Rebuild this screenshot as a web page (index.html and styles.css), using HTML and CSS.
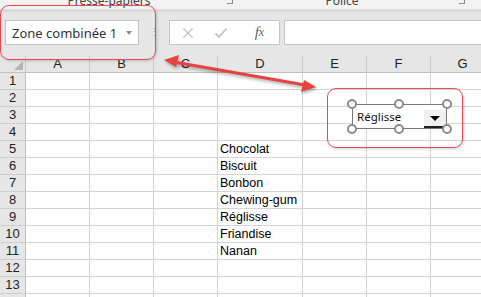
FILE: index.html
```html
<!DOCTYPE html>
<html lang="fr">
<head>
<meta charset="utf-8">
<title>Zone combinée</title>
<link rel="stylesheet" href="styles.css">
</head>
<body>
<div class="app">
  <div class="ribbon">
    <div class="group g1"><span class="glabel">Presse-papiers</span><span class="launcher"></span></div>
    <div class="group g2"><span class="glabel">Police</span><span class="launcher"></span></div>
  </div>
  <div class="fbar">
    <div class="namebox"><span class="nbtext">Zone combinée 1</span><span class="nbarrow"></span></div>
    <div class="grip">⋮</div>
    <div class="fbtns">
      <span class="fbtn">
        <svg width="12" height="12" viewBox="0 0 12 12"><path d="M1.5 1.5 L10.5 10.5 M10.5 1.5 L1.5 10.5" stroke="#c3c3c3" stroke-width="1.4" fill="none"/></svg>
      </span>
      <span class="fbtn">
        <svg width="14" height="12" viewBox="0 0 14 12"><path d="M1.5 6.5 L5 10 L12.5 1.5" stroke="#c3c3c3" stroke-width="1.8" fill="none"/></svg>
      </span>
      <span class="fbtn fx"><i>f</i><i class="x">x</i></span>
    </div>
    <div class="finput"></div>
  </div>
  <div class="sheet">
    <div class="row head">
      <div class="corner"><span class="tri"></span></div>
      <div class="ch">A</div><div class="ch">B</div><div class="ch">C</div><div class="ch">D</div><div class="ch">E</div><div class="ch">F</div><div class="ch">G</div>
    </div>
    <div class="row"><div class="rh">1</div><div class="c"></div><div class="c"></div><div class="c"></div><div class="c"></div><div class="c"></div><div class="c"></div><div class="c"></div></div>
    <div class="row"><div class="rh">2</div><div class="c"></div><div class="c"></div><div class="c"></div><div class="c"></div><div class="c"></div><div class="c"></div><div class="c"></div></div>
    <div class="row"><div class="rh">3</div><div class="c"></div><div class="c"></div><div class="c"></div><div class="c"></div><div class="c"></div><div class="c"></div><div class="c"></div></div>
    <div class="row"><div class="rh">4</div><div class="c"></div><div class="c"></div><div class="c"></div><div class="c"></div><div class="c"></div><div class="c"></div><div class="c"></div></div>
    <div class="row"><div class="rh">5</div><div class="c"></div><div class="c"></div><div class="c"></div><div class="c">Chocolat</div><div class="c"></div><div class="c"></div><div class="c"></div></div>
    <div class="row"><div class="rh">6</div><div class="c"></div><div class="c"></div><div class="c"></div><div class="c">Biscuit</div><div class="c"></div><div class="c"></div><div class="c"></div></div>
    <div class="row"><div class="rh">7</div><div class="c"></div><div class="c"></div><div class="c"></div><div class="c">Bonbon</div><div class="c"></div><div class="c"></div><div class="c"></div></div>
    <div class="row"><div class="rh">8</div><div class="c"></div><div class="c"></div><div class="c"></div><div class="c">Chewing-gum</div><div class="c"></div><div class="c"></div><div class="c"></div></div>
    <div class="row"><div class="rh">9</div><div class="c"></div><div class="c"></div><div class="c"></div><div class="c">Réglisse</div><div class="c"></div><div class="c"></div><div class="c"></div></div>
    <div class="row"><div class="rh">10</div><div class="c"></div><div class="c"></div><div class="c"></div><div class="c">Friandise</div><div class="c"></div><div class="c"></div><div class="c"></div></div>
    <div class="row"><div class="rh">11</div><div class="c"></div><div class="c"></div><div class="c"></div><div class="c">Nanan</div><div class="c"></div><div class="c"></div><div class="c"></div></div>
    <div class="row"><div class="rh">12</div><div class="c"></div><div class="c"></div><div class="c"></div><div class="c"></div><div class="c"></div><div class="c"></div><div class="c"></div></div>
    <div class="row"><div class="rh">13</div><div class="c"></div><div class="c"></div><div class="c"></div><div class="c"></div><div class="c"></div><div class="c"></div><div class="c"></div></div>
    <div class="row"><div class="rh"></div><div class="c"></div><div class="c"></div><div class="c"></div><div class="c"></div><div class="c"></div><div class="c"></div><div class="c"></div></div>
  </div>

  <div class="combo">
    <span class="combo-text">Réglisse</span>
    <span class="combo-btn"><span class="combo-tri"></span></span>
    <span class="h h-tl"></span><span class="h h-tm"></span><span class="h h-tr"></span>
    <span class="h h-bl"></span><span class="h h-bm"></span><span class="h h-br"></span>
  </div>

  <div class="callout callout-name"></div>
  <div class="callout callout-combo"></div>
  <svg class="arrow" width="481" height="297" viewBox="0 0 481 297">
    <line x1="174" y1="62" x2="305" y2="85" stroke="#e9413f" stroke-width="3"/>
    <polygon points="164,60 179,55 176,67" fill="#e9413f"/>
    <polygon points="316,87 301,92 304,80" fill="#e9413f"/>
  </svg>
</div>
</body>
</html>
```
FILE: styles.css
```css
* { box-sizing: border-box; }
html, body { margin: 0; padding: 0; }
body {
  width: 481px;
  height: 297px;
  overflow: hidden;
  background: #fdfefd;
  font-family: "Liberation Sans", Arial, sans-serif;
}
.app {
  position: relative;
  width: 481px;
  height: 297px;
  overflow: hidden;
}

/* Ribbon (cut off) */
.ribbon {
  height: 12px;
  background: #f3f3f3;
  border-bottom: 3px solid #dcdcdc;
  display: flex;
  overflow: hidden;
  font-family: "Noto Sans", "Open Sans", sans-serif;
  font-size: 12px;
  color: #444;
}
.group {
  position: relative;
  display: flex;
  justify-content: center;
}
.g1 { width: 238px; padding-right: 20px; }
.g2 { width: 232px; padding-right: 24px; }
.glabel {
  line-height: 16px;
  margin-top: -7px;
}
.launcher {
  position: absolute;
  right: 5px;
  top: -2px;
  width: 6px;
  height: 6px;
  border-right: 1px solid #8a8a8a;
  border-bottom: 1px solid #8a8a8a;
}

/* Formula bar */
.fbar {
  height: 44px;
  background: #e6e6e6;
  display: flex;
  align-items: flex-start;
  padding-top: 8px;
}
.namebox {
  margin-left: 5px;
  width: 134px;
  height: 25px;
  background: #fff;
  border: 1px solid #c6c6c6;
  display: flex;
  align-items: center;
  padding-left: 6px;
  font-family: "Noto Sans", "Open Sans", sans-serif;
  font-size: 13px;
  color: #333;
}
.nbtext { flex: 1; white-space: nowrap; }
.nbarrow {
  width: 0;
  height: 0;
  margin-right: 6px;
  border-left: 3.5px solid transparent;
  border-right: 3.5px solid transparent;
  border-top: 4px solid #8a8a8a;
}
.grip {
  width: 30px;
  text-align: center;
  color: #9a9a9a;
  font-size: 11px;
  line-height: 25px;
}
.fbtns {
  width: 111px;
  height: 25px;
  background: #fff;
  border: 1px solid #c6c6c6;
  display: flex;
  align-items: center;
  padding-left: 12px;
}
.fbtn {
  width: 38px;
  display: flex;
  align-items: center;
}
.fx {
  font-family: "Liberation Serif", "Times New Roman", serif;
  font-size: 15px;
  color: #666;
  padding-left: 9px;
}
.fx .x { font-size: 12px; }
.finput {
  flex: 1;
  height: 25px;
  margin-left: 4px;
  margin-right: -4px;
  background: #fff;
  border: 1px solid #c6c6c6;
}

/* Sheet grid */
.sheet { width: 495px; }
.row {
  display: grid;
  grid-template-columns: 26px 64px 64px 64px 85px 64px 64px 64px;
  height: 17px;
}
.row > div {
  border-right: 1px solid #d4d4d4;
  border-bottom: 1px solid #d4d4d4;
  line-height: 16px;
  white-space: nowrap;
}
.head > div {
  background: #e6e6e6;
  border-right-color: #c9c9c9;
  border-bottom-color: #c0c0c0;
  text-align: center;
  font-size: 13px;
  color: #222;
}
.corner { position: relative; }
.tri {
  position: absolute;
  right: 2px;
  bottom: 2px;
  width: 0;
  height: 0;
  border-left: 9px solid transparent;
  border-bottom: 9px solid #b4b4b4;
}
.rh {
  background: #e6e6e6;
  text-align: center;
  font-size: 13px;
  color: #222;
  border-right-color: #c0c0c0 !important;
  border-bottom-color: #cfcfcf !important;
}
.c {
  background: #fdfefd;
  font-size: 12.5px;
  padding-left: 2px;
  color: #000;
}

/* Form control */
.combo {
  position: absolute;
  left: 352px;
  top: 104px;
  width: 95px;
  height: 25px;
  background: #fff;
  border: 1.5px solid #777;
  font-family: "Noto Sans", "Open Sans", sans-serif;
  font-size: 11.5px;
  color: #111;
}
.combo-text {
  position: absolute;
  left: 4px;
  top: 4px;
  line-height: 16px;
}
.combo-btn {
  position: absolute;
  right: 0;
  top: 5px;
  width: 22px;
  height: 18px;
  background: #f0f0f0;
  border-bottom: 2px solid #222;
  display: flex;
  align-items: center;
  justify-content: center;
}
.combo-tri {
  width: 0;
  height: 0;
  border-left: 5px solid transparent;
  border-right: 5px solid transparent;
  border-top: 5px solid #000;
}
.h {
  position: absolute;
  width: 10px;
  height: 10px;
  border-radius: 50%;
  background: #fff;
  border: 2px solid #8c8c8c;
}
.h-tl { left: -6px; top: -6px; }
.h-tm { left: 41px; top: -6px; }
.h-tr { right: -6px; top: -6px; }
.h-bl { left: -6px; bottom: -6px; }
.h-bm { left: 41px; bottom: -6px; }
.h-br { right: -6px; bottom: -6px; }

/* Annotations */
.callout {
  position: absolute;
  border: 1.5px solid #ea4a4f;
  border-radius: 9px;
  box-shadow: 1px 1px 3px rgba(0,0,0,0.18);
}
.callout-name { left: 0; top: 5px; width: 156px; height: 55px; }
.callout-combo { left: 327px; top: 88px; width: 136px; height: 60px; }
.arrow {
  position: absolute;
  left: 0;
  top: 0;
  filter: drop-shadow(1px 2px 1.5px rgba(0,0,0,0.3));
}
```
